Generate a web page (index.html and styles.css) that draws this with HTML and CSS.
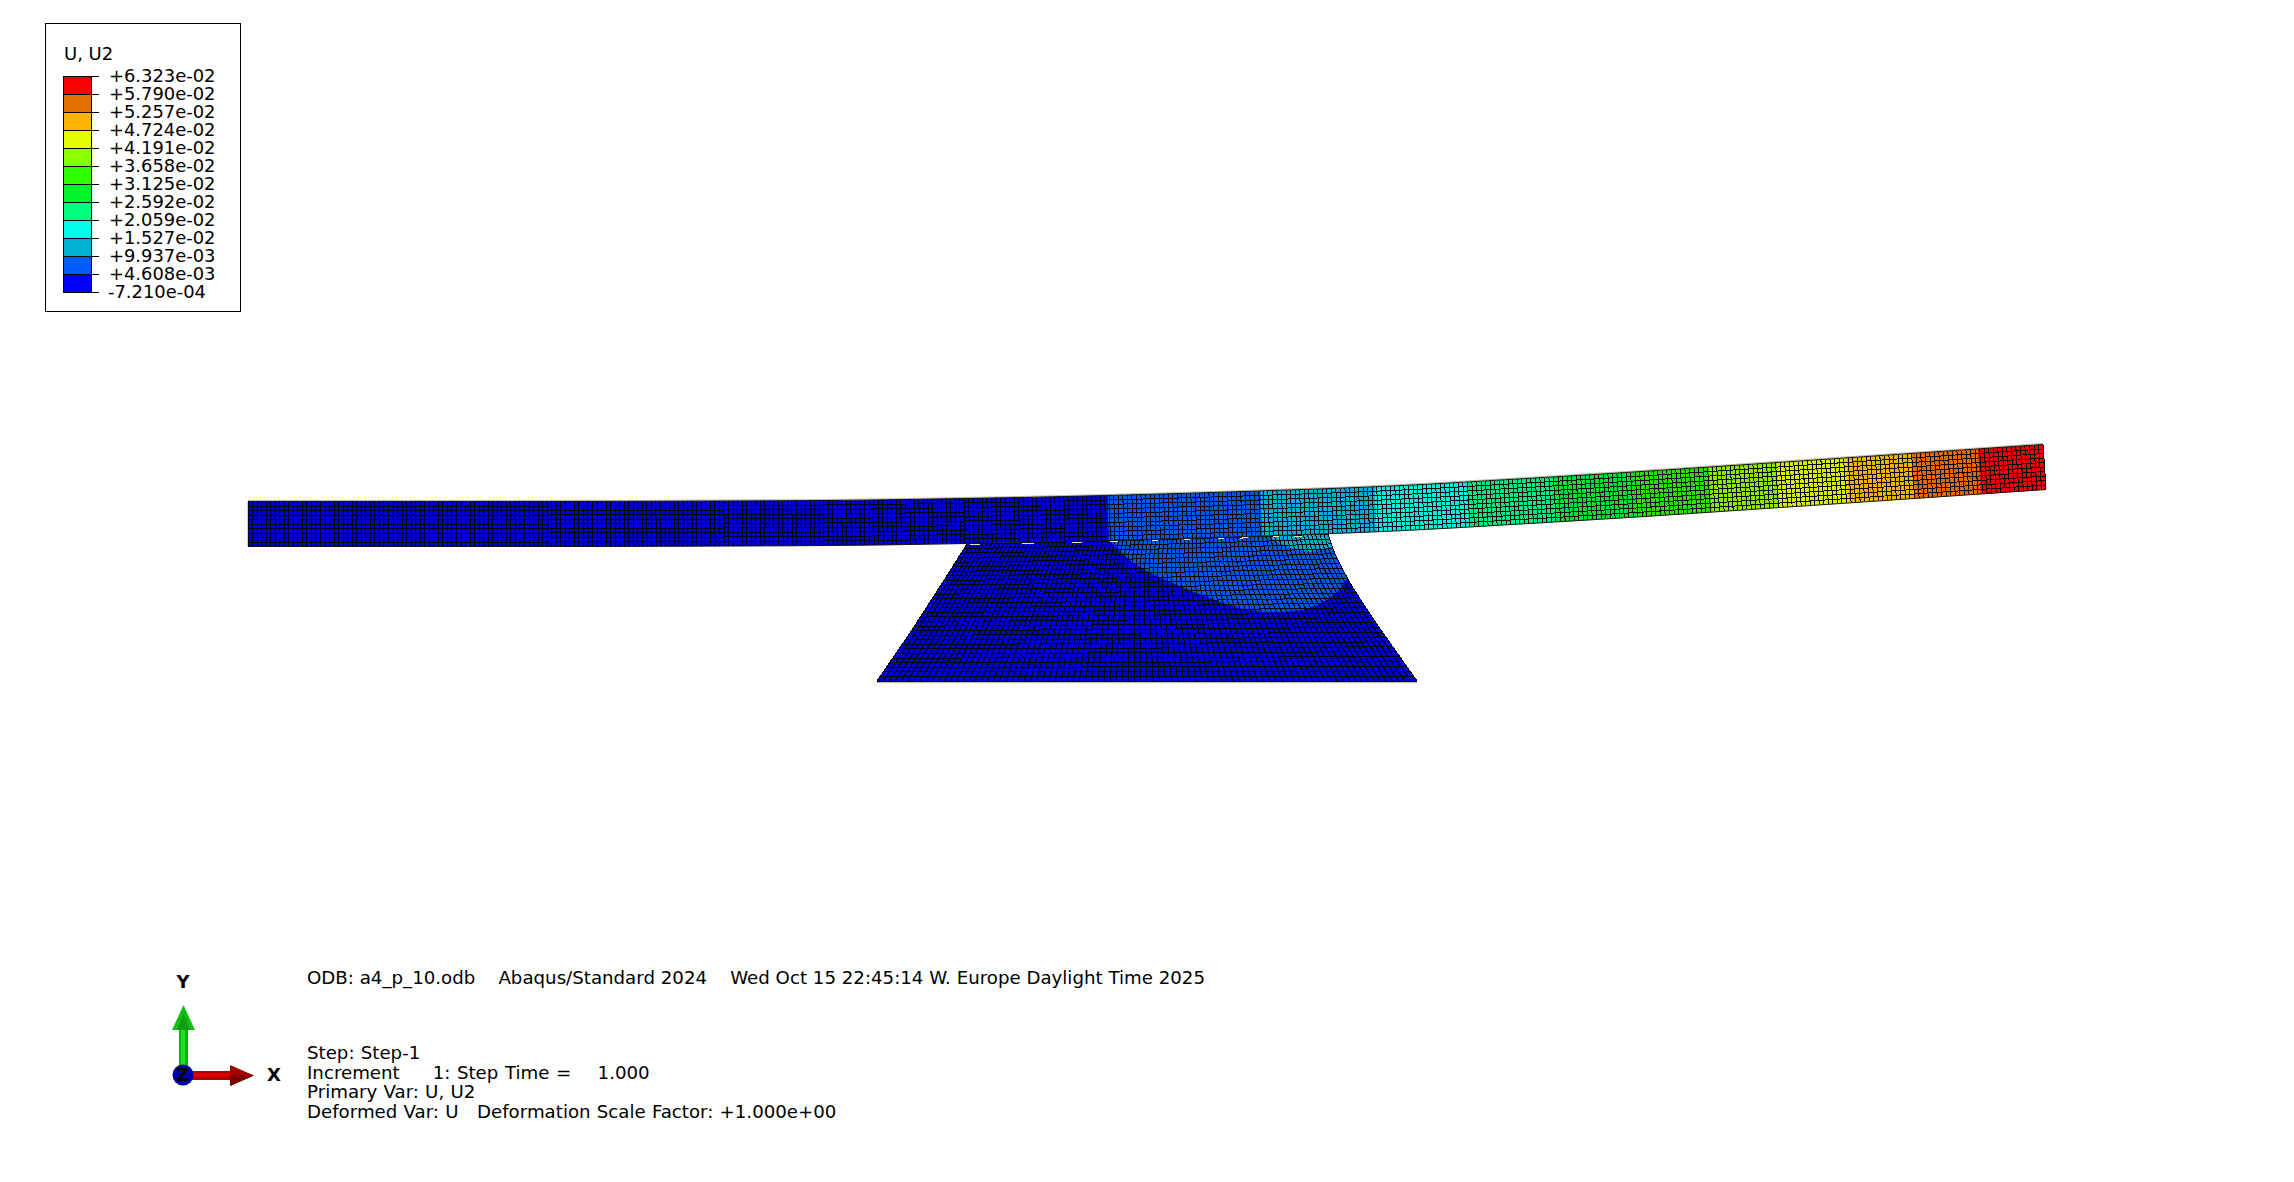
FILE: index.html
```html
<!DOCTYPE html>
<html lang="en">
<head>
<meta charset="utf-8">
<title>Abaqus viewport</title>
<link rel="stylesheet" href="styles.css">
</head>
<body>
<main class="viewport">
  <svg id="model" class="model" viewBox="0 0 2294 1182" width="2294" height="1182" aria-label="Deformed mesh with U2 contours"></svg>

  <section class="legend">
    <h2 class="legend-title">U, U2</h2>
    <div class="legend-body">
      <div class="bar">
        <i class="swatch c12"></i><i class="swatch c11"></i><i class="swatch c10"></i><i class="swatch c9"></i>
        <i class="swatch c8"></i><i class="swatch c7"></i><i class="swatch c6"></i><i class="swatch c5"></i>
        <i class="swatch c4"></i><i class="swatch c3"></i><i class="swatch c2"></i><i class="swatch c1"></i>
      </div>
      <ul class="labels">
        <li>+6.323e-02</li><li>+5.790e-02</li><li>+5.257e-02</li><li>+4.724e-02</li><li>+4.191e-02</li>
        <li>+3.658e-02</li><li>+3.125e-02</li><li>+2.592e-02</li><li>+2.059e-02</li><li>+1.527e-02</li>
        <li>+9.937e-03</li><li>+4.608e-03</li><li class="neg">-7.210e-04</li>
      </ul>
    </div>
  </section>

  <svg class="triad" viewBox="0 0 130 110" width="130" height="110" aria-label="Coordinate triad">
    <rect class="green-shaft" x="19" y="40" width="9" height="50"/>
    <rect class="green-light" x="21" y="40" width="4" height="50"/>
    <polygon class="green-head" points="23.5,20 12,45 35,45"/>
    <polygon class="green-head-dark" points="23.5,28 17,45 30,45"/>
    <rect class="red-shaft" x="30" y="86" width="44" height="9"/>
    <rect class="red-light" x="30" y="88" width="44" height="4"/>
    <polygon class="red-head" points="70,80 94,90.5 70,101"/>
    <polygon class="red-head-dark" points="70,91 94,90.5 70,101"/>
    <circle class="hub" cx="23" cy="90" r="10.5"/>
    <text class="axis" x="23" y="-3" dy="0.36em">Y</text>
    <text class="axis" x="23" y="90" dy="0.36em">Z</text>
    <text class="axis" x="114" y="90" dy="0.36em">X</text>
  </svg>

  <div class="info">
    <p class="info-head">ODB: a4_p_10.odb    Abaqus/Standard 2024    Wed Oct 15 22:45:14 W. Europe Daylight Time 2025</p>
    <p>Step: Step-1</p>
    <p class="wide">Increment     1: Step Time =    1.000</p>
    <p>Primary Var: U, U2</p>
    <p>Deformed Var: U   Deformation Scale Factor: +1.000e+00</p>
  </div>
</main>
<script src="mesh.js"></script>
</body>
</html>
```
FILE: styles.css
```css
* { box-sizing: border-box; }
html, body { margin: 0; padding: 0; background: #fff; }
body { font-family: "DejaVu Sans", Verdana, sans-serif; color: #000; overflow: hidden; }

.viewport { position: relative; width: 2294px; height: 1182px; background: #fff; overflow: hidden; }
.model { position: absolute; inset: 0; display: block; }

.legend {
  position: absolute; left: 45px; top: 23px; width: 196px; height: 289px;
  border: 1px solid #000; background: #fff; padding: 20px 0 0 17px;
}
.legend-title { margin: 0 0 13px 1px; font-size: 18px; font-weight: 400; line-height: 19px; height: 19px; }
.legend-body { display: flex; }
.bar { width: 29px; border: 1px solid #000; border-bottom: 0; display: flex; flex-direction: column; height: 217px; }
.swatch { display: block; height: 18px; flex: none; border-bottom: 1px solid #000; position: relative; }
.swatch::after { content: ""; position: absolute; left: 100%; bottom: -1px; width: 8px; height: 1px; background: #000; }
.swatch:first-child::before { content: ""; position: absolute; left: 100%; top: -1px; width: 8px; height: 1px; background: #000; }
.c1 { background: #0000ff; } .c2 { background: #005cff; } .c3 { background: #00b0d4; } .c4 { background: #00ffe8; }
.c5 { background: #00ff80; } .c6 { background: #00f52a; } .c7 { background: #2cff00; } .c8 { background: #8cff00; }
.c9 { background: #e6ff00; } .c10 { background: #ffb400; } .c11 { background: #e66e00; } .c12 { background: #ff0000; }
.labels { list-style: none; margin: -9px 0 0 17px; padding: 0; }
.labels li { height: 18px; line-height: 18px; font-size: 17.9px; white-space: pre; }
.labels .neg { margin-left: -1px; }

.triad { position: absolute; left: 160px; top: 985px; overflow: visible; }
.green-shaft { fill: #0fb00f; } .green-light { fill: #22dd22; }
.green-head { fill: #12c012; } .green-head-dark { fill: #0f9f0f; }
.red-shaft { fill: #b00000; } .red-light { fill: #dc0000; }
.red-head { fill: #a00000; } .red-head-dark { fill: #7d0000; }
.hub { fill: #0000a8; }
.axis { font-family: "DejaVu Sans", Verdana, sans-serif; font-weight: 700; font-size: 18px; text-anchor: middle; fill: #000; }

.info { position: absolute; left: 307px; top: 968px; font-size: 18.2px; line-height: 19.6px; word-spacing: 0.4px; }
.info p { margin: 0; height: 19.6px; white-space: pre; }
.info .info-head { margin-bottom: 55.4px; word-spacing: 0; }
.info .wide { word-spacing: 0.8px; }
```
FILE: mesh.js
```js
(function () {
  var NS = "http://www.w3.org/2000/svg";
  var svg = document.getElementById("model");

  var TOP = [[248, 501.5], [600, 501.5], [850, 500.5], [1050, 497], [1200, 493], [1390, 486.5], [1620, 473], [1860, 457], [2043, 444.5]];
  var H = 45;

  function lin(pts, x) {
    if (x <= pts[0][0]) return pts[0][1];
    for (var i = 1; i < pts.length; i++) {
      if (x <= pts[i][0]) {
        var a = pts[i - 1], b = pts[i];
        return a[1] + (b[1] - a[1]) * (x - a[0]) / (b[0] - a[0]);
      }
    }
    var p = pts[pts.length - 1], q = pts[pts.length - 2];
    return p[1] + (p[1] - q[1]) * (x - p[0]) / (p[0] - q[0]);
  }
  function top(x) {
    var s = 0;
    for (var d = -60; d <= 60; d += 20) s += lin(TOP, x + d);
    return s / 7;
  }
  function beam(x, t) {
    var m = (top(x + 5) - top(x - 5)) / 10;
    return [x - m * H * t, top(x) + H * t];
  }
  function add(tag, attrs) {
    var el = document.createElementNS(NS, tag);
    for (var k in attrs) el.setAttribute(k, attrs[k]);
    svg.appendChild(el);
    return el;
  }
  function fmt(p) { return p[0].toFixed(2) + " " + p[1].toFixed(2); }

  /* Support block */
  var BOT = 681;
  var LEFT = [[0, 967], [0.26, 944.5], [0.65, 910], [1, 877]];
  var RIGHT = [[0, 1328], [0.12, 1334], [0.226, 1341.5], [0.356, 1352], [0.596, 1375], [0.808, 1397], [1, 1417]];
  function block(u, v) {
    var xl = lin(LEFT, v), xr = lin(RIGHT, v);
    var x = xl + (xr - xl) * u;
    var xt = 967 + (1328 - 967) * u;
    var yt = top(xt) + H + 0.5;
    return [x, yt + (BOT - yt) * v];
  }
  var pts = [], i, j;
  for (i = 0; i <= 40; i++) pts.push(fmt(block(i / 40, 0)));
  for (i = 0; i <= 40; i++) pts.push(fmt(block(1, i / 40)));
  for (i = 40; i >= 0; i--) pts.push(fmt(block(i / 40, 1)));
  for (i = 40; i >= 0; i--) pts.push(fmt(block(0, i / 40)));
  var outline = "M" + pts.join("L") + "Z";

  var defs = add("defs", {});
  var clip = document.createElementNS(NS, "clipPath");
  clip.setAttribute("id", "blockClip");
  var cp = document.createElementNS(NS, "path");
  cp.setAttribute("d", outline);
  clip.appendChild(cp);
  defs.appendChild(clip);

  add("path", { d: outline, fill: "#0000d8" });
  var g = add("g", { "clip-path": "url(#blockClip)" });
  function region(points, fill) {
    var el = document.createElementNS(NS, "polygon");
    el.setAttribute("points", points);
    el.setAttribute("fill", fill);
    g.appendChild(el);
  }
  region("1107,530 1113,545 1133,563 1150,573 1170,582 1196,593 1223,603 1243,609 1263,612 1284,612 1303,610 1318,605 1330,598 1340,589 1350,575 1352,530", "#0058e4");
  region("1265,530 1273,540 1290,548 1310,552 1332,547 1335,530", "#00a8cc");

  /* Block mesh */
  var NU = 88, NV = 30, d = "";
  for (i = 0; i <= NU; i++) {
    var line = [];
    for (j = 0; j <= 24; j++) line.push(fmt(block(i / NU, j / 24)));
    d += "M" + line.join("L");
  }
  for (j = 0; j <= NV; j++) {
    var row = [];
    for (i = 0; i <= 40; i++) row.push(fmt(block(i / 40, j / NV)));
    d += "M" + row.join("L");
  }
  add("path", { d: d, fill: "none", stroke: "#000", "stroke-width": 1, "shape-rendering": "crispEdges" });
  add("line", { x1: 876, y1: 682, x2: 1417, y2: 682, stroke: "#b4b4b4", "stroke-width": 1, "shape-rendering": "crispEdges" });

  /* Beam contour bands */
  var X0 = 248, X1 = 2043;
  var stops = [X0, 1108, 1261, 1375, 1467, 1554, 1634, 1709, 1777, 1846, 1912, 1978, X1];
  var cols = ["#0000d8", "#0058e8", "#00b0d0", "#00f0e0", "#00e880", "#00e030", "#28e000", "#88e800", "#d8ec00", "#f0b000", "#e86800", "#f00000"];
  for (i = 0; i < cols.length; i++) {
    var poly = [], n = 24, a = stops[i], b = stops[i + 1];
    for (j = 0; j <= n; j++) poly.push(fmt(beam(a + (b - a) * j / n, 0)));
    for (j = n; j >= 0; j--) poly.push(fmt(beam(a + (b - a) * j / n, 1)));
    add("path", { d: "M" + poly.join("L") + "Z", fill: cols[i], stroke: cols[i], "stroke-width": 0.4 });
  }

  /* Beam mesh: 10 rows of about 4.5 px cells */
  var NC = 396, NR = 10, bd = "";
  for (i = 0; i <= NC; i++) {
    var x = X0 + (X1 - X0) * i / NC;
    bd += "M" + fmt(beam(x, 0.01)) + "L" + fmt(beam(x, 0.99));
  }
  for (j = 1; j < NR; j++) {
    var r = [];
    for (i = 0; i <= 90; i++) r.push(fmt(beam(X0 + (X1 - X0) * i / 90, j / NR)));
    bd += "M" + r.join("L");
  }
  add("path", { d: bd, fill: "none", stroke: "#000", "stroke-width": 1, "shape-rendering": "crispEdges" });

  /* Smooth outer edges of the beam with a pale fringe on top */
  function edge(t, off) {
    var e = [];
    for (var k = 0; k <= 90; k++) {
      var p = beam(X0 + (X1 - X0) * k / 90, t);
      e.push(p[0].toFixed(2) + " " + (p[1] + off).toFixed(2));
    }
    return "M" + e.join("L");
  }
  add("path", { d: edge(0, -1), fill: "none", stroke: "#b8b8a8", "stroke-width": 1 });
  add("path", { d: edge(0, 0) + edge(1, 0), fill: "none", stroke: "#14140a", "stroke-width": 1 });

  /* Small pale gaps along the contact line */
  var gaps = [[970, 980], [1022, 1034], [1072, 1082], [1110, 1118], [1152, 1158], [1184, 1190], [1218, 1224], [1240, 1248], [1273, 1279], [1294, 1302]];
  var gd = "";
  gaps.forEach(function (s) {
    gd += "M" + s[0] + " " + (top(s[0]) + H + 1.5).toFixed(1) + "L" + s[1] + " " + (top(s[1]) + H + 1.5).toFixed(1);
  });
  add("path", { d: gd, fill: "none", stroke: "#e6e2c8", "stroke-width": 1, "shape-rendering": "crispEdges" });
})();
```
